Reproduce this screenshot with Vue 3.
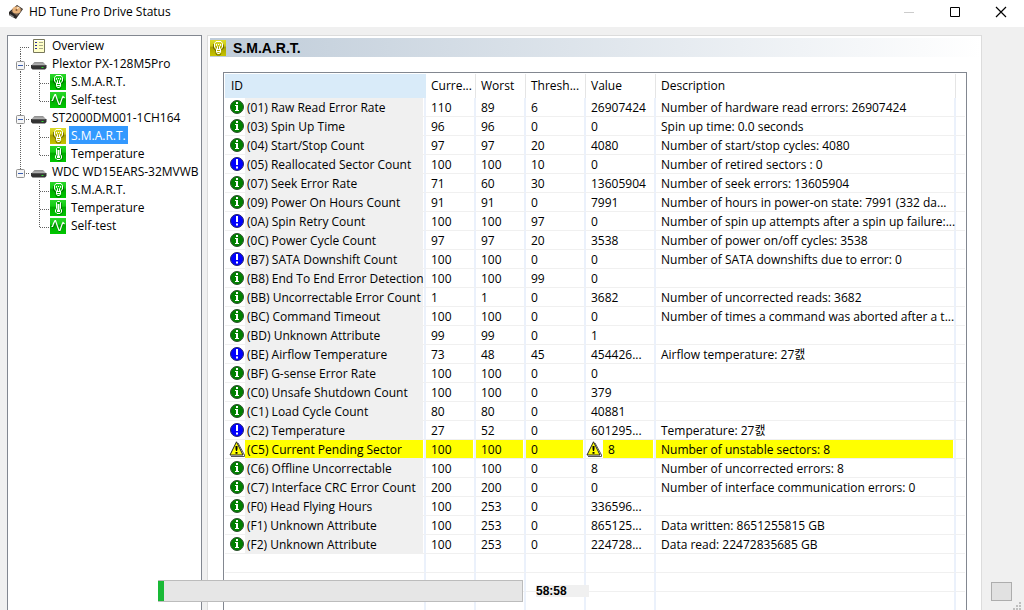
<script setup>
import { ref } from 'vue'

const tree = ref([
  { name: 'Overview', kind: 'overview', children: [] },
  {
    name: 'Plextor PX-128M5Pro', kind: 'drive',
    children: [{ name: 'S.M.A.R.T.', kind: 'bulb' }, { name: 'Self-test', kind: 'wave' }],
  },
  {
    name: 'ST2000DM001-1CH164', kind: 'drive',
    children: [{ name: 'S.M.A.R.T.', kind: 'bulb', warn: true, selected: true }, { name: 'Temperature', kind: 'thermo' }],
  },
  {
    name: 'WDC WD15EARS-32MVWB', kind: 'drive',
    children: [{ name: 'S.M.A.R.T.', kind: 'bulb' }, { name: 'Temperature', kind: 'thermo' }, { name: 'Self-test', kind: 'wave' }],
  },
])

const rows = [
  ['ok', '(01) Raw Read Error Rate', '110', '89', '6', '26907424', 'Number of hardware read errors: 26907424'],
  ['ok', '(03) Spin Up Time', '96', '96', '0', '0', 'Spin up time: 0.0 seconds'],
  ['ok', '(04) Start/Stop Count', '97', '97', '20', '4080', 'Number of start/stop cycles: 4080'],
  ['note', '(05) Reallocated Sector Count', '100', '100', '10', '0', 'Number of retired sectors : 0'],
  ['ok', '(07) Seek Error Rate', '71', '60', '30', '13605904', 'Number of seek errors: 13605904'],
  ['ok', '(09) Power On Hours Count', '91', '91', '0', '7991', 'Number of hours in power-on state: 7991 (332 da...'],
  ['note', '(0A) Spin Retry Count', '100', '100', '97', '0', 'Number of spin up attempts after a spin up failure:...'],
  ['ok', '(0C) Power Cycle Count', '97', '97', '20', '3538', 'Number of power on/off cycles: 3538'],
  ['note', '(B7) SATA Downshift Count', '100', '100', '0', '0', 'Number of SATA downshifts due to error: 0'],
  ['ok', '(B8) End To End Error Detection', '100', '100', '99', '0', ''],
  ['ok', '(BB) Uncorrectable Error Count', '1', '1', '0', '3682', 'Number of uncorrected reads: 3682'],
  ['ok', '(BC) Command Timeout', '100', '100', '0', '0', 'Number of times a command was aborted after a t...'],
  ['ok', '(BD) Unknown Attribute', '99', '99', '0', '1', ''],
  ['note', '(BE) Airflow Temperature', '73', '48', '45', '454426...', 'Airflow temperature: 27캜'],
  ['ok', '(BF) G-sense Error Rate', '100', '100', '0', '0', ''],
  ['ok', '(C0) Unsafe Shutdown Count', '100', '100', '0', '379', ''],
  ['ok', '(C1) Load Cycle Count', '80', '80', '0', '40881', ''],
  ['note', '(C2) Temperature', '27', '52', '0', '601295...', 'Temperature: 27캜'],
  ['warn', '(C5) Current Pending Sector', '100', '100', '0', '8', 'Number of unstable sectors: 8'],
  ['ok', '(C6) Offline Uncorrectable', '100', '100', '0', '8', 'Number of uncorrected errors: 8'],
  ['ok', '(C7) Interface CRC Error Count', '200', '200', '0', '0', 'Number of interface communication errors: 0'],
  ['ok', '(F0) Head Flying Hours', '100', '253', '0', '336596...', ''],
  ['ok', '(F1) Unknown Attribute', '100', '253', '0', '865125...', 'Data written: 8651255815 GB'],
  ['ok', '(F2) Unknown Attribute', '100', '253', '0', '224728...', 'Data read: 22472835685 GB'],
].map(([state, name, current, worst, threshold, value, description]) => ({
  state, name, description, numbers: [current, worst, threshold], value,
}))

const progress = 1.65
</script>

<template>
  <div class="window">
    <svg class="defs" width="0" height="0" aria-hidden="true">
      <defs>
        <linearGradient id="green" x1="0" y1="0" x2="0" y2="1">
          <stop offset="0" stop-color="#2ad62a" /><stop offset=".38" stop-color="#13cc13" />
          <stop offset=".45" stop-color="#00a800" /><stop offset="1" stop-color="#00c800" />
        </linearGradient>
        <linearGradient id="gold" x1="0" y1="0" x2="0" y2="1">
          <stop offset="0" stop-color="#dcdc28" /><stop offset=".38" stop-color="#cbc814" />
          <stop offset=".45" stop-color="#a5a000" /><stop offset="1" stop-color="#c8c400" />
        </linearGradient>
        <linearGradient id="metal" x1="0" y1="0" x2="0" y2="1">
          <stop offset="0" stop-color="#8c8c8c" /><stop offset="1" stop-color="#bdbdbd" />
        </linearGradient>
      </defs>
      <symbol id="bulb" viewBox="0 0 16 16">
        <path d="M3.500 4v4l2.500 3v3l1 1h3l1-1.500M13.500 4.500v3.500l-2 2" fill="none" stroke="#000" stroke-opacity=".4" />
        <path d="M6 1.500h5l1.500 2v3.500l-2 2v3l-1 1.500h-2l-1-1.500v-3l-2-2V3.500z" fill="none" stroke="#fff" />
        <path d="M6.500 4v1.500l1 1V9M10.500 4v1.500l-1 1V9M8 4.500h1M6.500 9.500h4M7 11.500h3" fill="none" stroke="#fff" />
      </symbol>
      <symbol id="wave" viewBox="0 0 16 16">
        <path d="M2 9.500h1.500l2-5 2 6 1.500 3h1l2-5 1-2h1.500" fill="none" stroke="#004000" stroke-opacity=".5" />
        <path d="M1.500 8.500h1l1-3 1.500-3h.5l2 6 1.500 4h1l2-6 1-2 1.500 1.500" fill="none" stroke="#fff" stroke-width="1.200" />
      </symbol>
      <symbol id="thermo" viewBox="0 0 16 16">
        <path d="M11.500 3v6l1 1.500v2.500l-2 1.500h-3" fill="none" stroke="#006000" stroke-opacity=".6" />
        <path d="M6.500 2.500l1-1h2l1 1v6l1 1.500v2l-1.500 1.500h-3L5.500 12v-2l1-1.500z" fill="#00a800" stroke="#fff" />
        <path d="M8.500 4v6M7 11h3" stroke="#fff" stroke-width="2" />
      </symbol>
      <symbol id="warning" viewBox="0 0 16 16">
        <path d="M9 2l6.500 12v1.500H2" fill="none" stroke="#555" />
        <path d="M7.500 .8L14 14H1z" fill="#ff0" stroke="#222" stroke-linejoin="round" />
        <path d="M6.500 5h2v3l-.5 2H7l-.5-2zM6.500 11h2v1.800h-2z" fill="#000" />
      </symbol>
    </svg>

    <header class="titlebar">
      <svg class="logo" width="16" height="16" viewBox="0 0 16 16" aria-hidden="true">
        <path d="M1 8L9 1l6 4-7 10-7-4z" fill="#2a2624" />
        <path d="M3 7.500L9 1.500l5.500 4L9 12z" fill="#6c5a4c" />
        <ellipse cx="8.500" cy="6" rx="4.200" ry="3.600" fill="#e7b27a" />
        <path d="M5 5l3.500 1 1-3.500 2 .8-3 2.700 3.500 1" fill="#fbe6c8" />
        <circle cx="8.500" cy="6" r="1" fill="#8a5c36" />
        <path d="M2 10l4 2.500-1 1-4-2.500z" fill="#888" />
      </svg>
      <h1>HD Tune Pro Drive Status</h1>
      <div class="controls">
        <button aria-label="Minimize" disabled><svg width="12" height="12"><path d="M1 6.500h10" stroke="#ccc" /></svg></button>
        <button aria-label="Maximize"><svg width="12" height="12"><path d="M1.500 1.500h9v9h-9z" fill="none" stroke="#000" /></svg></button>
        <button aria-label="Close"><svg width="12" height="12"><path d="M1 1l10 10M11 1L1 11" stroke="#000" stroke-width="1.200" /></svg></button>
      </div>
    </header>

    <div class="body">
      <nav class="tree" aria-label="Drives">
        <ul>
          <li v-for="(node, i) in tree" :key="node.name">
            <div class="node">
              <svg class="guide" width="22" height="18" aria-hidden="true">
                <path v-if="i > 0" d="M12.500 0v11" class="dots" />
                <path v-if="i < tree.length - 1" d="M12.500 11v7" class="dots" />
                <path d="M12 11.500H22" class="dots" />
                <g v-if="node.children.length">
                  <rect x="8.500" y="7.500" width="8" height="8" rx="1" fill="#f6f6f6" stroke="#919191" />
                  <path d="M10 11.500h5" stroke="#3b5fb0" />
                </g>
              </svg>
              <svg v-if="node.kind === 'overview'" class="icon" width="18" height="18" viewBox="0 0 18 18" aria-hidden="true">
                <path d="M3.500 3.500h11v13h-11z" fill="#ffffc8" stroke="#77775c" />
                <path d="M5 6.500h2M5 9.500h2M5 12.500h2" stroke="#2a2aa0" />
                <path d="M9 6.500h4M9 9.500h4M9 12.500h4" stroke="#a9a98c" />
                <path d="M4 4.500h10" stroke="#fff" />
              </svg>
              <svg v-else class="icon" width="18" height="18" viewBox="0 0 18 18" aria-hidden="true">
                <path d="M4.500 8h8.500l3.500 3.500H1z" fill="url(#metal)" />
                <path d="M1 11h15.500v3l-1.500 1.500H2.500L1 14z" fill="#333" />
                <path d="M2 11.500h13.500" stroke="#555" />
                <path d="M11.500 13.500h2" stroke="#2fdc2f" />
              </svg>
              <a href="#" @click.prevent>{{ node.name }}</a>
            </div>
            <ul v-if="node.children.length">
              <li v-for="(child, j) in node.children" :key="child.name" class="node">
                <svg class="guide" width="42" height="18" aria-hidden="true">
                  <path v-if="i < tree.length - 1" d="M12.500 0v18" class="dots" />
                  <path :d="j < node.children.length - 1 ? 'M31.500 0v18' : 'M31.500 0v12'" class="dots" />
                  <path d="M32 11.500h10" class="dots" />
                </svg>
                <svg class="badge" width="16" height="16" aria-hidden="true">
                  <rect width="16" height="16" :fill="child.warn ? 'url(#gold)' : 'url(#green)'" />
                  <use :href="'#' + child.kind" width="16" height="16" />
                </svg>
                <a href="#" :class="{ selected: child.selected }" @click.prevent>{{ child.name }}</a>
              </li>
            </ul>
          </li>
        </ul>
      </nav>

      <main class="panel">
        <div class="caption">
          <svg width="16" height="16" aria-hidden="true">
            <rect width="16" height="16" fill="url(#gold)" />
            <use href="#bulb" width="16" height="16" />
          </svg>
          <h2>S.M.A.R.T.</h2>
        </div>
        <div class="list">
          <table>
            <colgroup>
              <col class="c-id"><col class="c-num"><col class="c-num"><col class="c-thr"><col class="c-val"><col><col class="c-end">
            </colgroup>
            <thead>
              <tr><th class="sorted">ID</th><th>Curre...</th><th>Worst</th><th>Thresh...</th><th>Value</th><th>Description</th><td></td></tr>
            </thead>
            <tbody>
              <tr v-for="row in rows" :key="row.name" :class="row.state">
                <td class="id">
                  <div class="cell">
                    <svg v-if="row.state === 'warn'" class="state" width="16" height="16" aria-hidden="true"><use href="#warning" width="16" height="16" /></svg>
                    <svg v-else class="state" width="16" height="16" viewBox="0 0 16 16" aria-hidden="true">
                      <circle cx="8" cy="8" r="6.500" :fill="row.state === 'ok' ? '#008000' : '#00f'" :stroke="row.state === 'ok' ? '#2c4f2c' : '#22226c'" />
                      <path v-if="row.state === 'ok'" d="M7 3h2v2H7zM6 6h3v5h1v1H6v-1h1V7H6z" fill="#fff" />
                      <path v-else d="M7 3h2v6H7zM7 10.500h2v2H7z" fill="#fff" />
                    </svg>
                    <span class="fill">{{ row.name }}</span>
                  </div>
                </td>
                <td v-for="(n, k) in row.numbers" :key="k"><div class="cell"><span class="fill">{{ n }}</span></div></td>
                <td>
                  <div class="cell">
                    <svg v-if="row.state === 'warn'" class="inline" width="16" height="16" aria-hidden="true"><use href="#warning" width="16" height="16" /></svg>
                    <span class="fill">{{ row.value }}</span>
                  </div>
                </td>
                <td><div class="cell"><span class="fill">{{ row.description }}</span></div></td>
                <td class="end"></td>
              </tr>
              <tr v-for="n in 3" :key="'blank' + n"><td v-for="c in 6" :key="c"></td><td class="end"></td></tr>
            </tbody>
          </table>
        </div>
      </main>
    </div>

    <div class="status">
      <div class="progress" role="progressbar" aria-label="Elapsed" :aria-valuenow="progress">
        <div class="bar" :style="{ width: progress + '%' }"></div>
      </div>
      <span class="time">58:58</span>
      <button class="stub" aria-label="Options"></button>
    </div>
    <svg class="grip" width="9" height="8" aria-hidden="true">
      <path d="M6 0h2v2H6zM3 3h2v2H3zM6 3h2v2H6zM0 6h2v2H0zM3 6h2v2H3zM6 6h2v2H6z" fill="#bfbfbf" />
    </svg>
  </div>
</template>

<style>
html, body { overflow: hidden; }
</style>

<style scoped>
* { box-sizing: border-box; }
.window {
  position: relative; display: flex; flex-direction: column; height: 100vh; overflow: hidden;
  background: #f0f0f0; color: #000;
  font: 12px/18px "Open Sans", "Noto Sans CJK KR", sans-serif;
}
.defs { position: absolute; }
svg { flex: none; display: block; }
h1, h2, ul { margin: 0; padding: 0; font: inherit; list-style: none; }
button { padding: 0; border: 0; background: none; }
a { color: inherit; text-decoration: none; }

.titlebar { flex: none; display: flex; align-items: center; height: 27px; padding: 0 0 4px 8px; background: #fff; }
.titlebar h1 { margin-left: 5px; }
.controls { display: flex; margin-left: auto; }
.controls button { width: 46px; height: 22px; display: grid; place-items: center; }

.body { flex: 1; min-height: 0; display: flex; gap: 5px; padding: 8px 42px 0 7px; }
.tree { flex: none; width: 195px; overflow: hidden; background: #fff; border: 1px solid #828790; border-bottom: 0; }
.node { display: flex; height: 18px; line-height: 20px; white-space: nowrap; }
.node a { padding: 0 2px; }
.icon { margin-right: 2px; }
.badge { margin: 2px 3px 0 0; }
.selected { background: #39f; color: #fff; }
.dots { stroke: #606060; stroke-dasharray: 1 1; fill: none; }

.panel { flex: 1; min-width: 0; display: flex; flex-direction: column; background: #fff; border: 1px solid #dcdcdc; border-width: 1px 1px 0; padding: 2px 0 0 2px; }
.caption { flex: none; display: flex; align-items: center; height: 19px; margin-bottom: 15px; background: linear-gradient(90deg, #bfccd9, #fff); }
.caption h2 { margin-left: 7px; font: bold 14px/18px "Liberation Sans", Arial, sans-serif; }
.list { flex: 1; min-height: 0; margin: 0 14px 0 13px; overflow: hidden; border: 1px solid #828790; border-bottom: 0; padding: 1px 1px 0; }

table { width: 100%; table-layout: fixed; border-collapse: separate; border-spacing: 0; }
.c-id { width: 201px; }
.c-num { width: 50px; }
.c-thr { width: 60px; }
.c-val { width: 70px; }
.c-end { width: 9px; }
th { height: 24px; padding: 0 0 0 5px; border-right: 1px solid #e5e5e5; text-align: left; font-weight: normal; white-space: nowrap; }
th.sorted { padding-left: 6px; background: #d9ebf9; border-color: #d9ebf9; }
td { padding: 0; }
tbody td { height: 19px; border-right: 2px solid #ebf1fb; border-bottom: 1px solid #f0f0f0; }
tbody td.end { border-right: 0; }
.cell { display: flex; height: 18px; padding-right: 1px; line-height: 20px; white-space: nowrap; }
.fill { flex: 1; min-width: 0; padding-left: 5px; }
.id .fill { padding-left: 2px; background: #f0f0f0; }
.state { margin: 1px 0 0 4px; }
.inline { margin: 1px 1px 0 0; }
.warn .fill { background: #ff0; }

.status { position: absolute; left: 158px; right: 12px; bottom: 8px; display: flex; align-items: center; }
.progress { width: 365px; height: 22px; background: #e6e6e6; border: 1px solid #bcbcbc; border-left: 0; }
.bar { height: 100%; background: #19b936; }
.time { width: 53px; margin-left: 13px; background: #f0f0f0; font: bold 12px/12px "Liberation Sans", Arial, sans-serif; }
.stub { width: 21px; height: 19px; margin-left: auto; background: #e1e1e1; border: 1px solid #adadad; }
.grip { position: absolute; right: 2px; bottom: 0; }
</style>
